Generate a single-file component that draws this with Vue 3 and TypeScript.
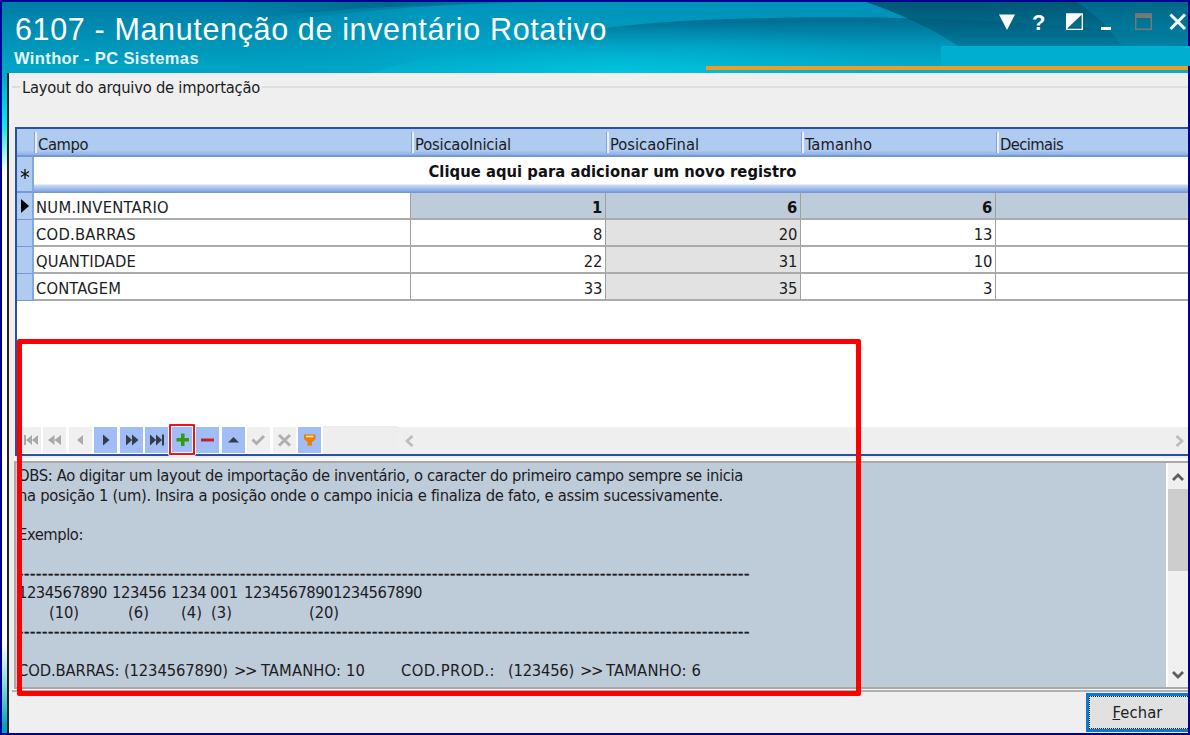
<script setup lang="ts">
import { nextTick, type Directive } from 'vue'

// Spreads the letter spacing so that a label takes exactly the given width.
const fit = (el: HTMLElement, width: number) => {
  el.style.letterSpacing = '0px'
  const count = (el.textContent ?? '').length
  const natural = el.getBoundingClientRect().width
  el.style.letterSpacing = `${(width - natural) / count}px`
}
const vFit: Directive<HTMLElement, number> = {
  mounted: (el, binding) => {
    nextTick(() => fit(el, binding.value))
    document.fonts.ready.then(() => fit(el, binding.value))
  },
}

const columns = [
  { name: 'Campo', width: 50 },
  { name: 'PosicaoInicial', width: 96 },
  { name: 'PosicaoFinal', width: 89 },
  { name: 'Tamanho', width: 67 },
  { name: 'Decimais', width: 63 },
]
const rows = [
  { campo: 'NUM.INVENTARIO', width: 133, values: ['1', '6', '6'] },
  { campo: 'COD.BARRAS', width: 100, values: ['8', '20', '13'] },
  { campo: 'QUANTIDADE', width: 100, values: ['22', '31', '10'] },
  { campo: 'CONTAGEM', width: 85, values: ['33', '35', '3'] },
]

type Icon = 'first' | 'rewind' | 'prev' | 'next' | 'forward' | 'last' | 'add' | 'remove' | 'edit' | 'post' | 'cancel' | 'filter'
const buttons: { icon: Icon; on: boolean }[] = [
  { icon: 'first', on: false },
  { icon: 'rewind', on: false },
  { icon: 'prev', on: false },
  { icon: 'next', on: true },
  { icon: 'forward', on: true },
  { icon: 'last', on: true },
  { icon: 'add', on: true },
  { icon: 'remove', on: true },
  { icon: 'edit', on: true },
  { icon: 'post', on: false },
  { icon: 'cancel', on: false },
  { icon: 'filter', on: true },
]

// Each line is a run of segments: text, gap before it, width.
type Segment = [string, number, number]
const dashes = '-'.repeat(122)
const lines: Segment[][] = [
  [['OBS: Ao digitar um layout de importação de inventário, o caracter do primeiro campo sempre se inicia', 0, 725]],
  [['na posição 1 (um). Insira a posição onde o campo inicia e finaliza de fato, e assim sucessivamente.', 0, 705]],
  [],
  [['Exemplo:', 0, 65]],
  [],
  [[dashes, 0, 732]],
  [['1234567890', 0, 89], ['123456', 5, 54], ['1234', 5, 35], ['001', 4, 28], ['12345678901234567890', 6, 178]],
  [['(10)', 31, 30], ['(6)', 49, 21], ['(4)', 32, 21], ['(3)', 9, 21], ['(20)', 77, 30]],
  [[dashes, 0, 732]],
  [],
  [['COD.BARRAS: (1234567890)', 0, 210], ['>>', 6, 22], ['TAMANHO: 10', 5, 104], ['COD.PROD.:', 36, 94], ['(123456)', 13, 66], ['>>', 6, 22], ['TAMANHO: 6', 4, 95]],
]
</script>

<template>
  <div class="window">
    <header class="titlebar">
      <svg class="waves" viewBox="0 0 1186 71" width="1186" height="71" preserveAspectRatio="none">
        <defs>
          <linearGradient id="base" x1="0" y1="0" x2="0" y2="1">
            <stop offset="0" stop-color="#007ca5" /><stop offset="1" stop-color="#00a6c6" />
          </linearGradient>
          <linearGradient id="upper" x1="0" y1="0" x2="1" y2="0">
            <stop offset="0" stop-color="#00a3c6" stop-opacity="0" /><stop offset="0.2" stop-color="#00a3c6" stop-opacity="0.65" /><stop offset="1" stop-color="#0096bd" stop-opacity="0.7" />
          </linearGradient>
          <linearGradient id="lower" x1="0" y1="0" x2="0" y2="1">
            <stop offset="0" stop-color="#006c90" /><stop offset="0.5" stop-color="#0097bb" /><stop offset="1" stop-color="#00b2d0" />
          </linearGradient>
          <linearGradient id="shade" x1="0" y1="0" x2="0" y2="1">
            <stop offset="0" stop-color="#004c68" stop-opacity="0.85" /><stop offset="1" stop-color="#007b9f" stop-opacity="0.6" />
          </linearGradient>
          <linearGradient id="rim" x1="0" y1="0" x2="1" y2="0">
            <stop offset="0" stop-color="#005f80" stop-opacity="0" /><stop offset="0.5" stop-color="#005f80" stop-opacity="0.7" /><stop offset="1" stop-color="#005f80" stop-opacity="0" />
          </linearGradient>
          <radialGradient id="glow" cx="0.5" cy="1" r="0.5" gradientTransform="translate(0 -0.8) scale(1 1.8)">
            <stop offset="0" stop-color="#00cbe6" stop-opacity="0.75" /><stop offset="1" stop-color="#00b4d2" stop-opacity="0" />
          </radialGradient>
        </defs>
        <rect width="1186" height="71" fill="url(#base)" />
        <path d="M235 26C340 9 430 2 540 0H1186V71H235Z" fill="url(#upper)" />
        <path d="M235 18C340 5 430 2 540 0H235Z" fill="url(#rim)" />
        <path d="M385 66C460 46 570 26 680 19C780 14 900 14 1000 20L1186 32V71H370Z" fill="url(#lower)" />
        <rect x="300" y="16" width="640" height="55" fill="url(#glow)" />
        <path d="M864 0C900 12 935 29 965 50L990 64H1186V0Z" fill="url(#shade)" />
        <path d="M1075 0C1093 12 1110 28 1120 44V64H1186V0Z" fill="#009dc0" opacity="0.25" />
      </svg>
      <div class="titles">
        <div class="title"><span v-fit="592">6107 - Manutenção de inventário Rotativo</span></div>
        <div class="subtitle"><span v-fit="185">Winthor - PC Sistemas</span></div>
      </div>
      <svg class="controls" viewBox="0 0 192 28" width="192" height="28">
        <path d="M3 6.500H19L11 22Z" fill="#fff" />
        <text x="36" y="22" class="help">?</text>
        <path d="M70.700 6.200H86.300V21.300H70.700Z" fill="none" stroke="#fff" stroke-width="1.300" />
        <path d="M70 5.500H87L70 21.500Z" fill="#fff" />
        <path d="M105 19H115V22H105Z" fill="#fff" />
        <path d="M139.700 6H155.300V21.300H139.700Z" fill="none" stroke="#777" stroke-width="1.400" />
        <path d="M139 5.500H156V10H139Z" fill="#777" />
        <path d="M174.500 6.500L189 21M189 6.500L174.500 21" stroke="#fff" stroke-width="3" />
      </svg>
      <div class="patch"></div>
      <div class="accent"></div>
    </header>

    <main class="panel">
      <div class="legend"><i class="tick"></i><span v-fit="238">Layout do arquivo de importação</span><i class="rule"></i></div>

      <section class="grid">
        <div class="grid-row head">
          <div class="mark"></div>
          <div v-for="c in columns" :key="c.name" class="th"><span v-fit="c.width">{{ c.name }}</span></div>
        </div>
        <div class="insert">
          <div class="mark">
            <svg viewBox="0 0 10 12" width="10" height="12"><path d="M5 1V11M1 3.500L9 8.500M9 3.500L1 8.500" stroke="#111" stroke-width="1.300" /></svg>
          </div>
          <div class="prompt"><span v-fit="368">Clique aqui para adicionar um novo registro</span></div>
        </div>
        <div v-for="(r, i) in rows" :key="r.campo" class="grid-row" :class="{ current: i === 0 }">
          <div class="mark"><svg v-if="i === 0" viewBox="0 0 8 14" width="8" height="14"><path d="M0 0L8 7L0 14Z" fill="#000" /></svg></div>
          <div class="td name"><span v-fit="r.width">{{ r.campo }}</span></div>
          <div v-for="(v, j) in r.values" :key="j" class="td num" :class="{ locked: j === 1 }">{{ v }}</div>
          <div class="td num"></div>
        </div>
        <div class="space"></div>
        <div class="navigator">
          <div v-for="b in buttons" :key="b.icon" class="nav" :class="[{ on: b.on }, b.icon]">
            <svg viewBox="0 0 23 26" width="23" height="26">
              <g v-if="b.icon === 'first'"><path d="M6 8H8V18H6ZM14 8V18L8 13ZM20 8V18L14 13Z" /></g>
              <path v-else-if="b.icon === 'rewind'" d="M11.500 8V18L5 13ZM18 8V18L11.500 13Z" />
              <path v-else-if="b.icon === 'prev'" d="M14 8V18L8 13Z" />
              <path v-else-if="b.icon === 'next'" d="M9 7.500V18.500L15.500 13Z" />
              <path v-else-if="b.icon === 'forward'" d="M6 7.500V18.500L12 13ZM12 7.500V18.500L18.500 13Z" />
              <path v-else-if="b.icon === 'last'" d="M5 7.500V18.500L11 13ZM11 7.500V18.500L17 13ZM17 7.500H19V18.500H17Z" />
              <path v-else-if="b.icon === 'add'" d="M10 6.500H13.500V11H18V14.500H13.500V19H10V14.500H5.500V11H10Z" fill="#319b11" />
              <path v-else-if="b.icon === 'remove'" d="M5 11.500H18V14.500H5Z" fill="#c8202c" />
              <path v-else-if="b.icon === 'edit'" d="M6 15.500L11.500 10L17 15.500Z" />
              <path v-else-if="b.icon === 'post'" d="M5.500 12.500L9.500 16.500L17 9" fill="none" stroke="#b0b0b0" stroke-width="3" />
              <path v-else-if="b.icon === 'cancel'" d="M6 8L17 18.500M17 8L6 18.500" fill="none" stroke="#b0b0b0" stroke-width="3" />
              <g v-else>
                <path d="M6 7.500H17.500V12L14 15V18.500H9.500V15L6 12Z" fill="#f07d00" />
                <path d="M8 9.500H15.500" stroke="#ffe2a8" stroke-width="1.600" />
              </g>
            </svg>
          </div>
          <div class="status"></div>
          <div class="hscroll">
            <svg viewBox="0 0 9 12" width="9" height="12"><path d="M7.500 1L2 6L7.500 11" /></svg>
            <svg viewBox="0 0 9 12" width="9" height="12"><path d="M1.500 1L7 6L1.500 11" /></svg>
          </div>
        </div>
      </section>

      <section class="memo">
        <div class="text">
          <div v-for="(line, i) in lines" :key="i" class="line">
            <span v-for="(s, j) in line" :key="j" v-fit="s[2]" class="seg" :class="{ dashes: s[0] === dashes }" :style="{ marginLeft: s[1] + 'px' }">{{ s[0] }}</span>
          </div>
        </div>
        <div class="vscroll">
          <svg viewBox="0 0 12 10" width="12" height="10"><path d="M1 8L6 3L11 8" /></svg>
          <div class="thumb"></div>
          <svg viewBox="0 0 12 10" width="12" height="10"><path d="M1 2L6 7L11 2" /></svg>
        </div>
      </section>

      <footer class="footer">
        <button class="close"><span v-fit="50"><u>F</u>echar</span></button>
      </footer>
    </main>

    <div class="callout area"></div>
    <div class="callout target"></div>
  </div>
</template>

<style>
body { margin: 0; overflow: hidden; }
</style>

<style scoped>
* { box-sizing: border-box; }
.window {
  position: relative;
  width: 1190px;
  height: 735px;
  border: 2px solid #000090;
  display: flex;
  flex-direction: column;
  font: 16.4px/20px "DejaVu Sans Condensed", "DejaVu Sans", sans-serif;
  color: #1c1c24;
  background: linear-gradient(#00a3c4 0, #00a3c4 68px, #00d4e4 105px, #12e6ea 125px, #fff 170px, #fff 640px, #8fdce2 680px, #00a2ba 725px);
}
span { white-space: pre; display: inline-block; }
svg { display: block; }

.titlebar { position: relative; height: 69px; flex: none; }
.waves { position: absolute; left: 0; top: 0; }
.titles { position: relative; padding-left: 12px; color: #fff; font-family: "Liberation Sans", Arial, sans-serif; }
.title { font-size: 30.5px; line-height: 34px; padding: 10px 0 0 1px; height: 46px; white-space: nowrap; }
.subtitle { font-size: 16.5px; line-height: 20px; font-weight: bold; height: 22px; color: #e5f7fa; }
.controls { position: absolute; left: 994px; top: 6px; }
.help { font: bold 22px "Liberation Sans", sans-serif; fill: #fff; }
.patch { position: absolute; left: 939px; top: 44px; width: 249px; height: 20px; background: #00aecf; }
.accent { position: absolute; left: 704px; top: 63.500px; right: 0; height: 4px; background: #f09c24; }

.panel {
  margin-left: 5px;
  height: 662px;
  border-left: 2px solid #222;
  border-top: 2px solid #1c3438;
  background: #efefef;
  display: flex;
  flex-direction: column;
}
.legend { display: flex; align-items: center; height: 54px; padding: 0 0 26px 3px; gap: 2px; flex: none; }
.legend span { padding-top: 1px; }
.tick { width: 8px; height: 2px; background: #dcdcdc; }
.rule { flex: 1; height: 2px; background: #dedede; }

.grid {
  margin-left: 6px;
  height: 329px;
  flex: none;
  display: flex;
  flex-direction: column;
  border: 2px solid #2a50a4;
  border-right: 0;
  background: #fff;
  overflow: hidden;
}
.grid-row { display: grid; grid-template-columns: 17px 377px 195px 195px 195px 1fr; height: 27px; flex: none; }
.mark {
  background: #afcbf0;
  border-right: 2px solid #86a8df;
  border-bottom: 1.500px solid #7397d8;
  display: flex;
  align-items: center;
  justify-content: center;
}
.head { height: 28px; background: linear-gradient(#afcbf0 0 82%, #8fb1e6); border-bottom: 2px solid #7598d8; }
.head .mark { border: 0; background: none; }
.th { position: relative; padding: 6px 0 0 4px; height: 26px; }
.th::before { content: ""; position: absolute; left: 0; top: 3px; width: 3px; height: 21px; background: linear-gradient(90deg, #82a2da 0 1px, #e7f1ff 1px); }
.insert { display: grid; grid-template-columns: 17px 1fr; height: 36px; flex: none; }
.insert .mark { border-bottom: 2px solid #7598d8; }
.prompt {
  text-align: center;
  font-weight: bold;
  padding: 5px 0 0 3px;
  color: #111;
  background: linear-gradient(#fff 0 27px, #c9dcf6 28px, #87aae4 34px, #7598d8 35px);
}
.td { border-right: 1px solid #a0a0a0; border-bottom: 2px solid #ababab; padding-top: 5px; height: 27px; }
.td:last-child { border-right: 0; }
.name { padding-left: 2px; }
.num { text-align: right; padding-right: 3px; letter-spacing: -.3px; }
.locked { background: #e2e2e2; }
.current .num { background: #becbd9; font-weight: bold; color: #111; }
.space { flex: 1; }

.navigator { display: flex; height: 28px; flex: none; padding-left: 0.500px; }
.nav { width: 23px; height: 26px; margin: 1px 2.500px 1px 0; background: #f0f0f0; flex: none; }
.nav svg { fill: #a9a9a9; }
.nav.on { background: #a0bdf5; }
.nav.on svg { fill: #343b49; }
.status { width: 75px; background: #eee; margin-left: -1px; }
.hscroll { flex: 1; margin-top: 1px; background: #efefef; display: flex; justify-content: space-between; align-items: center; padding: 0 4px 0 7px; }
.hscroll svg { fill: none; stroke: #bdbdbd; stroke-width: 2.800; }

.memo {
  margin: 5px 0 0 5px;
  height: 228px;
  flex: none;
  display: flex;
  background: #becbd9;
  border: 2px solid #a9a9a9;
  border-right: 0;
  overflow: hidden;
  box-shadow: 0 -3px 0 #fafafa;
}
.text { flex: 1; padding: 3px 0 0 2px; white-space: nowrap; }
.line { height: 19.500px; line-height: 19.500px; display: flex; }
.seg { flex: none; height: 19.500px; }
.dashes { -webkit-text-stroke: .5px currentColor; }
.vscroll { width: 22px; border-left: 2px solid #fff; background: #f0f0f0; display: flex; flex-direction: column; align-items: center; padding: 9px 0 7px; flex: none; }
.vscroll svg { fill: none; stroke: #5c5c5c; stroke-width: 2.800; flex: none; }
.thumb { width: 100%; height: 82px; margin: 7px 0 auto; background: #cdcdcd; }

.footer { flex: 1; margin-left: 3px; border-top: 2px solid #b0b0b0; display: flex; justify-content: flex-end; align-items: flex-start; box-shadow: 0 -1px 0 #f8f8f8; margin-top: 1px; }
.close {
  width: 102px;
  height: 39px;
  margin-top: 1px;
  border: 3px solid #0a78d4;
  border-right: 0;
  background: #e1e1e1;
  padding: 0 2px 0 0;
  font: inherit;
  color: inherit;
  position: relative;
}
.close::after { content: ""; position: absolute; inset: 0 0 0 0; border: 1px dotted #222; border-right: 0; }

.callout { position: absolute; pointer-events: none; }
.area { left: 15px; top: 337px; width: 844px; height: 357px; border: 5px solid #f00; border-radius: 2px; }
.target { left: 166.500px; top: 422px; width: 26px; height: 31px; border: 2px solid #f2101c; border-radius: 1px; box-shadow: 0 0 0 1px #fff, inset 0 0 0 1px #fff; }
</style>
